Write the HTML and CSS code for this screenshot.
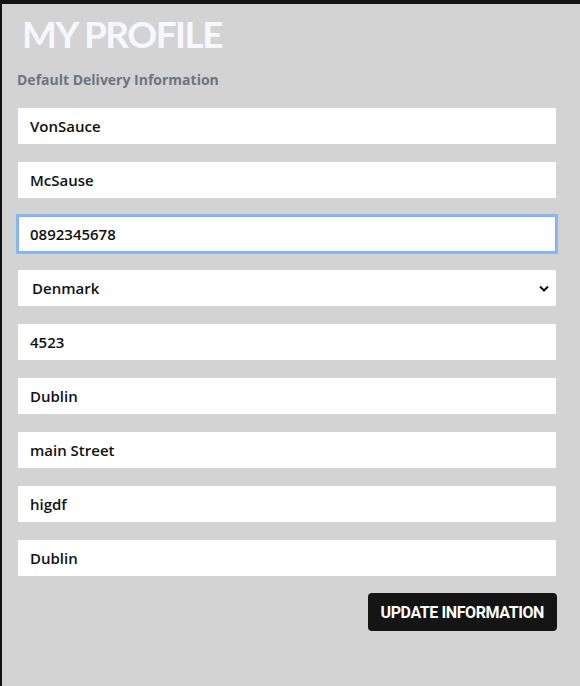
FILE: index.html
```html
<!DOCTYPE html>
<html>
<head>
<meta charset="utf-8">
<link rel="stylesheet" href="styles.css">
</head>
<body>
<div class="frame">
  <main class="profile">
    <h1 class="title">MY PROFILE</h1>
    <h2 class="subtitle">Default Delivery Information</h2>
    <form class="form">
      <input class="field" type="text" value="VonSauce">
      <input class="field" type="text" value="McSause">
      <input class="field field-focus" type="text" value="0892345678">
      <div class="select-wrap">
        <select class="field select">
          <option>Denmark</option>
        </select>
        <svg class="chev" width="10" height="7" viewBox="0 0 10 7"><path d="M1 1.5 L5 5.5 L9 1.5" fill="none" stroke="#111" stroke-width="2"/></svg>
      </div>
      <input class="field" type="text" value="4523">
      <input class="field" type="text" value="Dublin">
      <input class="field" type="text" value="main Street">
      <input class="field" type="text" value="higdf">
      <input class="field" type="text" value="Dublin">
      <div class="actions">
        <button class="btn" type="button">UPDATE INFORMATION</button>
      </div>
    </form>
  </main>
</div>
</body>
</html>
```
FILE: styles.css
```css
html, body {
  margin: 0;
  padding: 0;
  background: #141414;
  height: 100%;
}
.frame {
  padding-top: 4px;
  padding-left: 2px;
  height: 100%;
  box-sizing: border-box;
}
.profile {
  background: #d3d3d3;
  height: 100%;
  box-sizing: border-box;
  padding: 0 24px 0 16px;
  font-family: "Open Sans", sans-serif;
}
.title {
  margin: 0;
  padding: 6px 0 0 4px;
  font-family: "Lato", sans-serif;
  font-weight: 700;
  font-size: 37px;
  line-height: 48px;
  color: #f6f8ff;
  letter-spacing: -1.5px;
}
.subtitle {
  margin: 12px 0 0 -1px;
  font-size: 14px;
  font-weight: 700;
  line-height: 20px;
  color: #6b7480;
}
.form {
  display: flex;
  flex-direction: column;
  gap: 18px;
  margin-top: 18px;
}
.field {
  display: block;
  width: 100%;
  height: 36px;
  box-sizing: border-box;
  border: none;
  outline: none;
  background: #fff;
  padding: 0 12px;
  font-family: "Open Sans", sans-serif;
  font-size: 15px;
  font-weight: 600;
  color: #111;
}
.field-focus {
  box-shadow: 0 0 0 2px #8ab7f0;
  border: 1px solid #7fb2f5;
  padding: 0 11px;
}
.select-wrap {
  position: relative;
}
.select {
  appearance: none;
  -webkit-appearance: none;
  padding-left: 14px;
}
.chev {
  position: absolute;
  right: 7px;
  top: 15px;
  pointer-events: none;
}
.actions {
  display: flex;
  justify-content: flex-end;
  margin-right: -1px;
  margin-top: -1px;
}
.btn {
  background: #141414;
  color: #fff;
  border: none;
  border-radius: 4px;
  height: 38px;
  padding: 0 13px;
  font-family: "Roboto", sans-serif;
  font-weight: 700;
  font-size: 16px;
  letter-spacing: -0.4px;
}
```
